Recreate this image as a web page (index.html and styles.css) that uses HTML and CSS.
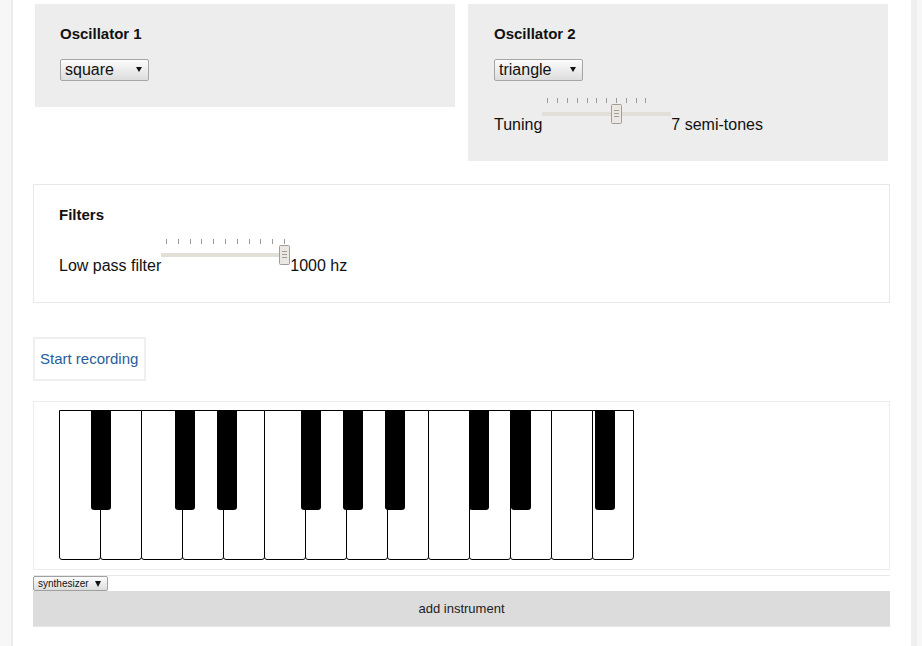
FILE: index.html
```html
<!DOCTYPE html>
<html lang="en">
<head>
<meta charset="utf-8">
<title>Synth</title>
<link rel="stylesheet" href="styles.css">
</head>
<body>
<div class="page">
  <div class="osc-row">
    <section class="panel osc">
      <h3 class="title">Oscillator 1</h3>
      <span class="select"><select><option>square</option></select></span>
    </section>
    <section class="panel osc osc-tuning">
      <h3 class="title">Oscillator 2</h3>
      <span class="select"><select><option>triangle</option></select></span>
      <div class="slider-row">
        <span class="label">Tuning</span>
        <svg class="slider" width="129" height="27" viewBox="0 0 129 27">
          <g stroke="#9a9a9a" stroke-width="1">
            <line x1="5.5" y1="1" x2="5.5" y2="6"/>
            <line x1="15.5" y1="1" x2="15.5" y2="6"/>
            <line x1="25.5" y1="1" x2="25.5" y2="6"/>
            <line x1="35.5" y1="1" x2="35.5" y2="6"/>
            <line x1="45.5" y1="1" x2="45.5" y2="6"/>
            <line x1="54.5" y1="1" x2="54.5" y2="6"/>
            <line x1="64.5" y1="1" x2="64.5" y2="6"/>
            <line x1="74.5" y1="1" x2="74.5" y2="6"/>
            <line x1="84.5" y1="1" x2="84.5" y2="6"/>
            <line x1="94.5" y1="1" x2="94.5" y2="6"/>
            <line x1="103.5" y1="1" x2="103.5" y2="6"/>
          </g>
          <rect x="0" y="15" width="129" height="4" fill="#e2ded8"/>
          <rect x="69.5" y="7.5" width="10" height="19" rx="1" fill="#ebe7e2" stroke="#a39d97"/>
          <path d="M72 13.5h5M72 16.5h5M72 19.5h5" stroke="#a39d97" stroke-width="1"/>
        </svg>
        <span class="value">7 semi-tones</span>
      </div>
    </section>
  </div>

  <section class="panel filters">
    <h3 class="title">Filters</h3>
    <div class="slider-row">
      <span class="label">Low pass filter</span>
      <svg class="slider" width="129" height="27" viewBox="0 0 129 27">
        <g stroke="#9a9a9a" stroke-width="1">
          <line x1="5.5" y1="1" x2="5.5" y2="6"/>
          <line x1="17.5" y1="1" x2="17.5" y2="6"/>
          <line x1="29.5" y1="1" x2="29.5" y2="6"/>
          <line x1="40.5" y1="1" x2="40.5" y2="6"/>
          <line x1="52.5" y1="1" x2="52.5" y2="6"/>
          <line x1="64.5" y1="1" x2="64.5" y2="6"/>
          <line x1="76.5" y1="1" x2="76.5" y2="6"/>
          <line x1="88.5" y1="1" x2="88.5" y2="6"/>
          <line x1="99.5" y1="1" x2="99.5" y2="6"/>
          <line x1="111.5" y1="1" x2="111.5" y2="6"/>
          <line x1="123.5" y1="1" x2="123.5" y2="6"/>
        </g>
        <rect x="0" y="15" width="125" height="4" fill="#e2ded8"/>
        <rect x="118.5" y="7.5" width="10" height="19" rx="1" fill="#ebe7e2" stroke="#a39d97"/>
        <path d="M121 13.5h5M121 16.5h5M121 19.5h5" stroke="#a39d97" stroke-width="1"/>
      </svg>
      <span class="value">1000 hz</span>
    </div>
  </section>

  <button class="record" type="button">Start recording</button>

  <div class="piano">
    <div class="keys">
      <div class="white"></div><div class="white"></div><div class="white"></div><div class="white"></div>
      <div class="white"></div><div class="white"></div><div class="white"></div><div class="white"></div>
      <div class="white"></div><div class="white"></div><div class="white"></div><div class="white"></div>
      <div class="white"></div><div class="white"></div>
      <div class="black" style="left:32px"></div>
      <div class="black" style="left:116px"></div>
      <div class="black" style="left:158px"></div>
      <div class="black" style="left:242px"></div>
      <div class="black" style="left:284px"></div>
      <div class="black" style="left:326px"></div>
      <div class="black" style="left:410px"></div>
      <div class="black" style="left:452px"></div>
      <div class="black" style="left:536px"></div>
    </div>
  </div>

  <div class="footer">
    <span class="select small"><select><option>synthesizer</option></select></span>
    <button class="add" type="button">add instrument</button>
  </div>
</div>
</body>
</html>
```

FILE: styles.css
```css
html, body {
  margin: 0;
  padding: 0;
}

body {
  background: #f7f7f7;
  font-family: "Liberation Sans", Arial, sans-serif;
  color: #111;
}

.page {
  box-sizing: border-box;
  margin-left: 11px;
  width: 906px;
  min-height: 646px;
  background: #fff;
  border-left: 2px solid #ececec;
  border-right: 6px solid #efefef;
  padding: 4px 21px 20px 20px;
}

.osc-row {
  display: flex;
  align-items: flex-start;
  gap: 13px;
  padding: 0 2px;
}

.panel {
  box-sizing: border-box;
}

.osc {
  width: 420px;
  background: #ededed;
  padding: 21px 25px 26px;
}

.osc-tuning {
  padding-left: 26px;
  padding-bottom: 27px;
}

.title {
  margin: 0 0 16px;
  font-size: 15px;
  line-height: 18px;
  font-weight: bold;
  color: #111;
}

.select {
  position: relative;
  display: block;
  width: max-content;
}

.select select {
  -webkit-appearance: none;
  appearance: none;
  display: block;
  margin: 0;
  box-sizing: border-box;
  width: 89px;
  height: 22px;
  border: 1px solid #a6a6a6;
  border-radius: 2px;
  background: linear-gradient(#fcfcfc, #dddddd);
  font-family: "Liberation Sans", Arial, sans-serif;
  font-size: 16px;
  color: #111;
  padding: 0 0 1px 4px;
  outline: none;
}

.select::after {
  content: "";
  position: absolute;
  right: 7px;
  top: 8px;
  border-left: 3px solid transparent;
  border-right: 3px solid transparent;
  border-top: 5px solid #111;
  pointer-events: none;
}

.slider-row {
  display: flex;
  align-items: flex-end;
  margin-top: 16px;
  font-size: 16px;
  line-height: 18px;
  white-space: nowrap;
}

.slider {
  display: block;
  flex: none;
  margin-bottom: 10px;
}

.filters {
  margin-top: 23px;
  border: 1px solid #e8e8e8;
  padding: 21px 25px 27px;
}

.filters .title {
  margin-bottom: 14px;
}

.filters .slider-row {
  margin-top: 0;
}

.record {
  display: block;
  box-sizing: border-box;
  margin: 34px 0 0;
  height: 44px;
  border: 2px solid #efefef;
  background: #fff;
  color: #1f5e9c;
  font-family: "Liberation Sans", Arial, sans-serif;
  font-size: 15px;
  line-height: 40px;
  padding: 0 6px 0 5px;
}

.piano {
  margin-top: 20px;
  border: 1px solid #ececec;
  padding: 8px 25px 9px;
}

.keys {
  position: relative;
  display: flex;
  width: max-content;
}

.white {
  box-sizing: border-box;
  width: 42px;
  height: 150px;
  border: 1px solid #000;
  border-radius: 0 0 3px 3px;
  background: #fff;
  margin-left: -1px;
}

.white:first-child {
  margin-left: 0;
}

.black {
  position: absolute;
  top: 0;
  width: 20px;
  height: 100px;
  background: #000;
  border-radius: 0 0 3px 3px;
}

.footer {
  margin-top: 5px;
  border-top: 1px solid #e8e8e8;
}

.select.small select {
  width: 75px;
  height: 15px;
  font-size: 10px;
  padding: 0 0 0 4px;
  border-color: #a0a0a0;
}

.select.small::after {
  right: 7px;
  top: 5px;
  border-left-width: 3px;
  border-right-width: 3px;
  border-top-width: 6px;
}

.add {
  display: block;
  box-sizing: border-box;
  width: 100%;
  height: 36px;
  margin: 0;
  padding: 0;
  border: 0;
  border-bottom: 1px solid #e6e6e6;
  background: #dcdcdc;
  color: #222;
  font-family: "Liberation Sans", Arial, sans-serif;
  font-size: 13px;
  line-height: 35px;
}
```
